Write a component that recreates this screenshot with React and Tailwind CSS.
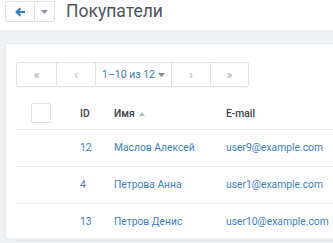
import React from 'react';

const rows = [
  { id: 12, name: 'Маслов Алексей', email: 'user9@example.com' },
  { id: 4, name: 'Петрова Анна', email: 'user1@example.com' },
  { id: 13, name: 'Петров Денис', email: 'user10@example.com' },
];

function Caret({ className }) {
  return (
    <svg width="7" height="4" viewBox="0 0 7 4" className={className}>
      <path d="M0 0h7L3.5 4z" fill="currentColor" />
    </svg>
  );
}

export default function App() {
  return (
    <div className="h-[243px] w-[333px] overflow-hidden bg-[#eef1f4] font-['Roboto',sans-serif]">
      <div className="flex h-[30px] items-start gap-[11px] bg-white pl-[5px] pt-[1px]">
        <div className="flex h-[21px] rounded-[2px] border border-[#dfe3e7] bg-white">
          <button className="flex w-[29px] items-center justify-center border-r border-[#dfe3e7] text-[#2f7bc1]">
            <svg width="11" height="10" viewBox="0 0 11 10">
              <path d="M10 5H2M5.5 1.2L1.6 5l3.9 3.8" stroke="currentColor" strokeWidth="2" fill="none" />
            </svg>
          </button>
          <button className="flex w-[19px] items-center justify-center text-[#8a96a3]">
            <Caret />
          </button>
        </div>
        <h1 className="mt-[-2px] text-[17.5px] leading-[24px] text-[#4f555b]">Покупатели</h1>
      </div>

      <div className="mt-[13px] ml-[5px] h-[195px] border-l border-t border-[#e6e9ec] bg-white pl-[10px] pt-[18px]">
        <div className="flex h-[25px] w-[233px] rounded-[2px] border border-[#dfe3e7] text-[#a3acb5] shadow-[0_1px_1px_rgba(0,0,0,0.04)]">
          <div className="flex w-[40px] items-center justify-center border-r border-[#dfe3e7] text-[12px]">«</div>
          <div className="flex w-[39px] items-center justify-center border-r border-[#dfe3e7] text-[12px]">‹</div>
          <div className="flex w-[76px] items-center justify-center gap-[3px] border-r border-[#dfe3e7] text-[10.5px] text-[#3f7fbf]">
            1–10 из 12 <Caret className="text-[#7f8a95]" />
          </div>
          <div className="flex w-[39px] items-center justify-center border-r border-[#dfe3e7] text-[12px]">›</div>
          <div className="flex flex-1 items-center justify-center text-[12px]">»</div>
        </div>

        <div className="mt-[16px] w-[400px] text-[10.3px]">
          <div className="flex h-[27px] items-start border-b border-[#e8ebee] font-medium text-[#3c4147]">
            <div className="w-[64px] shrink-0 pl-[15px]">
              <div className="h-[20px] w-[20px] rounded-[2px] border border-[#dfe3e7] bg-white" />
            </div>
            <div className="w-[34px] shrink-0 pt-[3px]">ID</div>
            <div className="flex w-[112px] shrink-0 items-center gap-[4px] pt-[3px]">
              Имя
              <svg width="6" height="4" viewBox="0 0 6 4" className="mt-[1px] text-[#b8c0c8]">
                <path d="M0 4h6L3 0z" fill="currentColor" />
              </svg>
            </div>
            <div className="pt-[3px]">E-mail</div>
          </div>
          {rows.map((r) => (
            <div key={r.id} className="flex h-[37px] items-center border-b border-[#e8ebee] text-[#3f7fbf]">
              <div className="w-[64px] shrink-0" />
              <div className="w-[34px] shrink-0">{r.id}</div>
              <div className="w-[112px] shrink-0">{r.name}</div>
              <div className="whitespace-nowrap">{r.email}</div>
            </div>
          ))}
        </div>
      </div>
    </div>
  );
}
